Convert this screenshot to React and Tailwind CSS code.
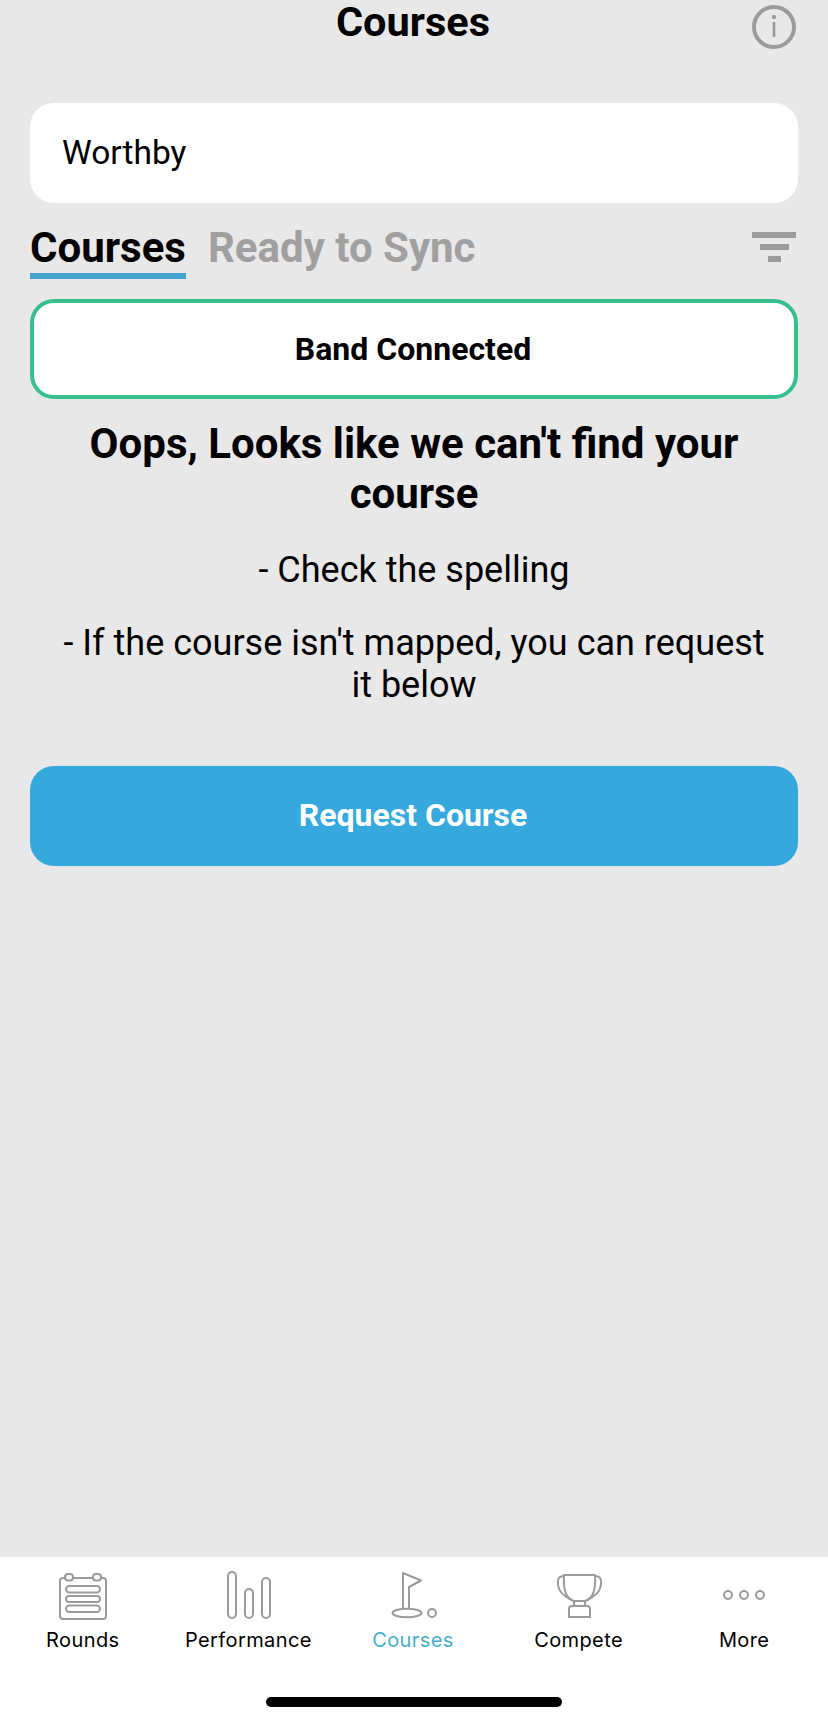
const roboto = { fontFamily: "Roboto, sans-serif" };

function IconRounds() {
  return (
    <svg width="50" height="50" viewBox="0 0 50 50" fill="none" stroke="#9b9b9b" strokeWidth="2">
      <rect x="2" y="8" width="46" height="41" rx="3" />
      <rect x="7" y="4" width="8" height="6.5" rx="3" fill="#fff" />
      <rect x="35" y="4" width="8" height="6.5" rx="3" fill="#fff" />
      <rect x="8" y="16" width="34" height="6.5" rx="3.2" />
      <rect x="8" y="26" width="34" height="6" rx="3" />
      <rect x="8" y="35.5" width="34" height="6.5" rx="3.2" />
    </svg>
  );
}

function IconPerformance() {
  return (
    <svg width="50" height="50" viewBox="0 0 50 50" fill="none" stroke="#9b9b9b" strokeWidth="2">
      <rect x="5" y="2" width="8" height="46" rx="4" />
      <rect x="22" y="19" width="8" height="29" rx="4" />
      <rect x="39" y="8" width="8" height="40" rx="4" />
    </svg>
  );
}

function IconFlag() {
  return (
    <svg width="50" height="50" viewBox="0 0 50 50" fill="none" stroke="#9b9b9b" strokeWidth="2">
      <path d="M14 42 V3 L32 10.5 L20 17 V42" strokeLinejoin="round" />
      <ellipse cx="18" cy="43" rx="14.5" ry="4.2" fill="#fff" />
      <circle cx="43" cy="43" r="4" />
    </svg>
  );
}

function IconTrophy() {
  return (
    <svg width="50" height="50" viewBox="0 0 50 50" fill="none" stroke="#9b9b9b" strokeWidth="2">
      <path d="M9 5 H40 C41 20 38 29 30 31 H19 C11 29 8 20 9 5 Z" strokeLinejoin="round" />
      <path d="M9 6 C4 6 2 9 3 15 C4 23 10 27 17 30" />
      <path d="M40 6 C45 6 47 9 46 15 C45 23 39 27 32 30" />
      <path d="M19 31 V36 M30 31 V36" />
      <path d="M14 47 V39 Q14 36 17 36 H32 Q35 36 35 39 V47 Z" />
    </svg>
  );
}

function IconMore() {
  return (
    <svg width="50" height="50" viewBox="0 0 50 50" fill="none" stroke="#9b9b9b" strokeWidth="2">
      <circle cx="8" cy="25" r="4" />
      <circle cx="24" cy="25" r="4" />
      <circle cx="40" cy="25" r="4" />
    </svg>
  );
}

const tabs = [
  { label: "Rounds", Icon: IconRounds, nudge: "" },
  { label: "Performance", Icon: IconPerformance, nudge: "" },
  { label: "Courses", Icon: IconFlag, active: true, nudge: "pr-[2px]" },
  { label: "Compete", Icon: IconTrophy, nudge: "pr-[2px]" },
  { label: "More", Icon: IconMore, nudge: "pr-[2px]" },
];

export default function App() {
  return (
    <div className="w-[828px] h-[1723px] bg-[#e8e8e8] flex flex-col text-black overflow-hidden" style={roboto}>
      <header className="h-[103px] relative shrink-0">
        <h1 className="text-center text-[41.5px] leading-[44px] font-bold pr-[2px]">Courses</h1>
        <svg className="absolute right-[32px] top-[5px]" width="44" height="44" viewBox="0 0 44 44" fill="none">
          <circle cx="22" cy="22" r="20" stroke="#9b9b9b" strokeWidth="4" />
          <circle cx="22" cy="12" r="2.2" fill="#9b9b9b" />
          <rect x="20.7" y="17" width="2.6" height="15" fill="#9b9b9b" />
        </svg>
      </header>

      <main className="flex-1 px-[30px] flex flex-col">
        <div className="h-[100px] bg-white rounded-[24px] flex items-center pl-[32px] text-[33.5px]">Worthby</div>

        <div className="mt-[20px] h-[56px] flex items-start">
          <div className="h-[56px] border-b-[6px] border-[#45a5d0] text-[42px] leading-[50px] font-bold">Courses</div>
          <div className="ml-[22px] text-[42px] leading-[50px] font-bold text-[#a0a0a0]">Ready to Sync</div>
          <div className="ml-auto mr-[2px] mt-[9px] flex flex-col items-center gap-[6px]">
            <div className="w-[44px] h-[6px] bg-[#9b9b9b]"></div>
            <div className="w-[29px] h-[6px] bg-[#9b9b9b]"></div>
            <div className="w-[13px] h-[6px] bg-[#9b9b9b]"></div>
          </div>
        </div>

        <div className="mt-[20px] h-[100px] bg-white rounded-[24px] border-[4px] border-[#37c08e] flex items-center justify-center text-[32px] font-bold pr-[2px]">
          Band Connected
        </div>

        <h2 className="mt-[20px] text-center text-[42px] leading-[50px] font-bold px-[30px]">
          Oops, Looks like we can't find your course
        </h2>
        <p className="mt-[30px] text-center text-[36px] leading-[42px]">- Check the spelling</p>
        <p className="mt-[31px] text-center text-[36px] leading-[42px] px-[30px]">
          - If the course isn't mapped, you can request it below
        </p>

        <div className="mt-[60px] h-[100px] bg-[#35a8de] rounded-[24px] flex items-center justify-center text-white text-[32px] font-bold pb-[2px] pr-[2px]">
          Request Course
        </div>
      </main>

      <nav className="h-[166px] bg-white shrink-0 flex flex-col">
        <div className="flex pt-[13px]">
          {tabs.map(({ label, Icon, active, nudge }) => (
            <div key={label} className="flex-1 flex flex-col items-center">
              <Icon />
              <div
                className={`mt-[7px] text-[20px] leading-[26px] tracking-[0.4px] ${nudge} ${active ? "text-[#4aafcb]" : "text-black"}`}
                style={{ fontFamily: "Inter, sans-serif" }}
              >
                {label}
              </div>
            </div>
          ))}
        </div>
        <div className="mt-auto mb-[16px] mx-auto w-[296px] h-[10px] rounded-full bg-black"></div>
      </nav>
    </div>
  );
}
